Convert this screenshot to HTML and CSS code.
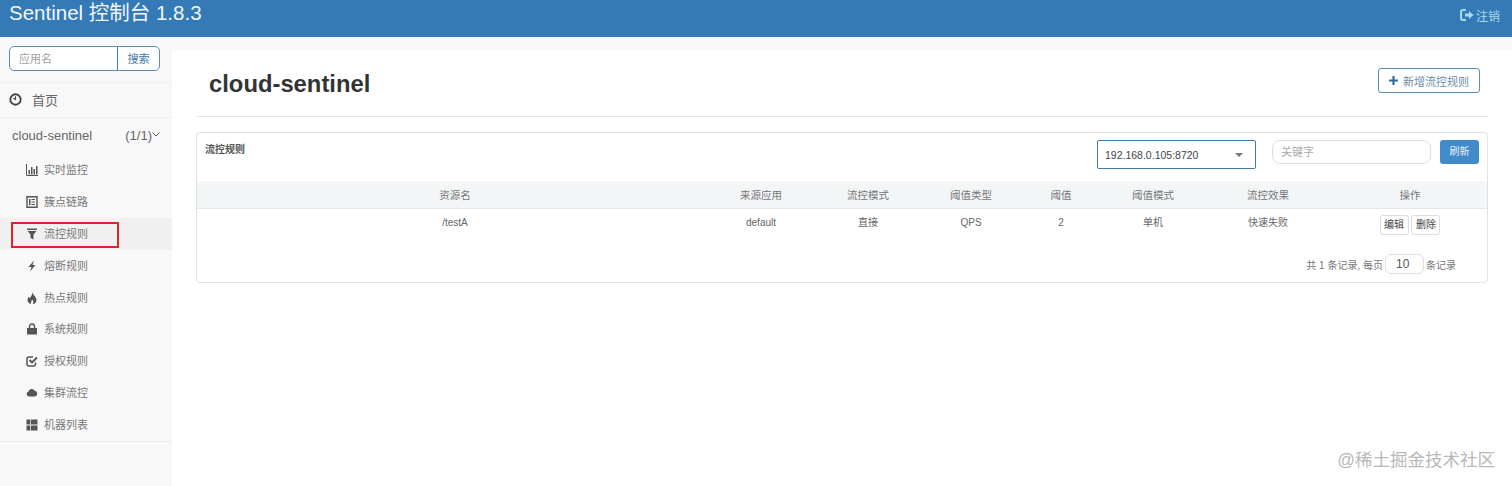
FILE: index.html
```html
<!DOCTYPE html>
<html lang="en">
<head>
  <meta charset="UTF-8">
  <title>Sentinel 控制台 1.8.3</title>
  <link rel="stylesheet" href="styles.css">
</head>
<body>
  <!-- Top bar -->
  <header class="navbar">
    <div class="brand">Sentinel 控制台 1.8.3</div>
    <a class="logout">
      <svg class="logout-icon" viewBox="0 0 14 12"><path d="M6 1H3a2 2 0 0 0-2 2v6a2 2 0 0 0 2 2h3" fill="none" stroke="currentColor" stroke-width="2"/><path d="M5 4.500h4V2l4.500 4L9 10V7.500H5z" fill="currentColor"/></svg>
      注销
    </a>
  </header>

  <div class="layout">
    <!-- Sidebar -->
    <aside class="sidebar">
      <div class="search-group">
        <div class="search-input">应用名</div>
        <div class="search-btn">搜索</div>
      </div>
      <div class="home-row">
        <svg class="home-icon" viewBox="0 0 14 14"><circle cx="7" cy="7" r="5.600" fill="none" stroke="currentColor" stroke-width="2"/><path d="M7 3.500V7L4.500 5.500" fill="none" stroke="currentColor" stroke-width="1.200"/></svg>
        <span>首页</span>
      </div>
      <div class="app-row">
        <span>cloud-sentinel</span>
        <span class="app-count">(1/1)<svg class="chevron" viewBox="0 0 8 5"><path d="M.5 .5 4 4 7.500 .5" fill="none" stroke="currentColor"/></svg></span>
      </div>
      <nav class="menu">
        <div class="menu-item">
          <svg class="menu-icon" viewBox="0 0 12 12"><path d="M.5 0v11.500H12" fill="none" stroke="currentColor"/><path d="M2.500 6h1.500v4.500H2.500zM5 3h1.500v7.500H5zM7.500 5H9v5.500H7.500zM10 2h1.500v8.500H10z" fill="currentColor"/></svg>
          <span class="menu-text">实时监控</span>
        </div>
        <div class="menu-item">
          <svg class="menu-icon" viewBox="0 0 12 12"><path d="M1 .7h10v10.600H1z" fill="none" stroke="currentColor" stroke-width="1.400"/><path d="M3 3h1.500v6H3zM5.500 3H9v1H5.500zM5.500 5.500H9v1H5.500zM5.500 8H9v1H5.500z" fill="currentColor"/></svg>
          <span class="menu-text">簇点链路</span>
        </div>
        <div class="menu-item active">
          <svg class="menu-icon" viewBox="0 0 12 12"><path d="M1 .5h10V2H1zM1.500 3h9L7.500 6.500v5l-3-1.500V6.500z" fill="currentColor"/></svg>
          <span class="menu-text">流控规则</span>
          <span class="highlight"></span>
        </div>
        <div class="menu-item">
          <svg class="menu-icon" viewBox="0 0 12 12"><path d="M8 .5 2.500 7h3L4 11.500 9.500 5h-3z" fill="currentColor"/></svg>
          <span class="menu-text">熔断规则</span>
        </div>
        <div class="menu-item">
          <svg class="menu-icon" viewBox="0 0 12 12"><path d="M6 0c.5 2.500 4.500 4.500 4.500 8A4.200 4.200 0 0 1 6.500 12c1.500-1.500 1-3-.5-4.500C6 9 4.500 10 5 12 3 11.500 1.500 10 1.500 8c0-1.500.8-2.800 1.500-3.500 0 1 .5 1.500 1 1.500C5 4.500 6.500 3 6 0z" fill="currentColor"/></svg>
          <span class="menu-text">热点规则</span>
        </div>
        <div class="menu-item">
          <svg class="menu-icon" viewBox="0 0 12 12"><path d="M3.500 5V3.500a2.500 2.500 0 0 1 5 0V5" fill="none" stroke="currentColor" stroke-width="1.400"/><path d="M1 5h10v6.500H1z" fill="currentColor"/></svg>
          <span class="menu-text">系统规则</span>
        </div>
        <div class="menu-item">
          <svg class="menu-icon" viewBox="0 0 12 12"><path d="M9.500 7.500V9a2 2 0 0 1-2 2H3a2 2 0 0 1-2-2V4a2 2 0 0 1 2-2h4" fill="none" stroke="currentColor" stroke-width="1.500"/><path d="M3.500 5 6 7.500 11 2.500" fill="none" stroke="currentColor" stroke-width="1.800"/></svg>
          <span class="menu-text">授权规则</span>
        </div>
        <div class="menu-item">
          <svg class="menu-icon" viewBox="0 0 12 12"><path d="M3 9.500a2.500 2.500 0 0 1-.5-4.900A3.300 3.300 0 0 1 8.700 3.800 2.900 2.900 0 0 1 9 9.500z" fill="currentColor"/></svg>
          <span class="menu-text">集群流控</span>
        </div>
        <div class="menu-item">
          <svg class="menu-icon" viewBox="0 0 12 12"><path d="M.5 .5h3.800v5H.5zM5 .5h6.500v5H5zM.5 6.500h3.800v5H.5zM5 6.500h6.500v5H5z" fill="currentColor"/></svg>
          <span class="menu-text">机器列表</span>
        </div>
      </nav>
    </aside>

    <!-- Main content -->
    <main class="content">
      <div class="page-head">
        <h1 class="page-title">cloud-sentinel</h1>
        <div class="add-btn">
          <svg class="plus-icon" viewBox="0 0 10 10"><path d="M3.800 0h2.400v3.800H10v2.400H6.200V10H3.800V6.200H0V3.800h3.800z" fill="currentColor"/></svg>
          新增流控规则
        </div>
      </div>

      <section class="panel">
        <div class="panel-head">
          <div class="panel-title">流控规则</div>
          <div class="select-box">
            <span>192.168.0.105:8720</span>
            <span class="caret"></span>
          </div>
          <div class="keyword-input">关键字</div>
          <div class="refresh-btn">刷新</div>
        </div>

        <div class="rule-row rule-head">
          <div>资源名</div>
          <div>来源应用</div>
          <div>流控模式</div>
          <div>阈值类型</div>
          <div>阈值</div>
          <div>阈值模式</div>
          <div>流控效果</div>
          <div class="col-ops">操作</div>
        </div>
        <div class="rule-row rule-body">
          <div>/testA</div>
          <div>default</div>
          <div>直接</div>
          <div>QPS</div>
          <div>2</div>
          <div>单机</div>
          <div>快速失败</div>
          <div class="col-ops">
            <span class="mini-btn">编辑</span>
            <span class="mini-btn">删除</span>
          </div>
        </div>

        <div class="panel-foot">
          <span>共 1 条记录, 每页</span>
          <span class="page-size">10</span>
          <span>条记录</span>
        </div>
      </section>
    </main>
  </div>

  <div class="watermark">@稀土掘金技术社区</div>
</body>
</html>
```

FILE: styles.css
```css
/* Reset, base font */
html, body {
  height: 100%;
}
body {
  margin: 0;
  position: relative;
  overflow: hidden;
  background: #fff;
  color: #676a6c;
  font-family: "Liberation Sans", "Noto Sans CJK SC", sans-serif;
  font-size: 10px;
}

/* Top bar */
.navbar {
  height: 37px;
  box-sizing: border-box;
  padding: 0 12px 12px 9px;
  display: flex;
  justify-content: space-between;
  align-items: center;
  background: #337ab7;
}
.brand {
  color: #f2f6fa;
  font-size: 20.500px;
  line-height: 24px;
}
.logout {
  display: flex;
  align-items: center;
  gap: 2px;
  margin-top: 5px;
  color: #a9dbe8;
  font-size: 12px;
}
.logout-icon {
  width: 14px;
  height: 12px;
}

.layout {
  display: flex;
  height: 449px;
}

/* Sidebar */
.sidebar {
  width: 172px;
  flex: none;
  background: #f8f8f8;
}
.search-group {
  display: flex;
  height: 25px;
  margin: 9px 12px 0 9px;
  box-sizing: border-box;
  border: 1px solid #5b8db8;
  border-radius: 5px;
  background: #fff;
  font-size: 11px;
}
.search-input {
  flex: 1;
  padding-left: 9px;
  line-height: 24px;
  color: #a0a0a0;
}
.search-btn {
  width: 41px;
  border-left: 1px solid #3f7cae;
  text-align: center;
  line-height: 25px;
  color: #3f78ab;
}
.home-row {
  display: flex;
  align-items: center;
  height: 36px;
  margin-top: 11px;
  padding: 0 0 2px 9px;
  box-sizing: border-box;
  border-top: 1px solid #f1f1f1;
  border-bottom: 1px solid #eeeeee;
  font-size: 13px;
  color: #666;
}
.home-icon {
  width: 13px;
  height: 13px;
  margin-right: 10px;
  color: #444;
}
.app-row {
  display: flex;
  justify-content: space-between;
  align-items: center;
  height: 35px;
  padding: 0 12px;
  font-size: 13px;
  color: #666;
}
.chevron {
  width: 8px;
  height: 5px;
  margin-bottom: 3px;
  color: #555;
}
.menu {
  padding-top: 1.500px;
  border-bottom: 1px solid #ececec;
}
.menu-item {
  position: relative;
  display: flex;
  align-items: center;
  height: 31.800px;
  padding-left: 26px;
  color: #777;
  font-size: 11px;
}
.menu-item.active {
  background: #f0f0f0;
}
.menu-icon {
  width: 12px;
  height: 12px;
  margin-right: 6px;
  color: #555;
}
.menu-text {
  line-height: 14px;
}
/* red marker box drawn over the active row */
.highlight {
  position: absolute;
  left: 11px;
  top: 4px;
  width: 108px;
  height: 26px;
  box-sizing: border-box;
  border: 2px solid #d9252f;
}

/* Main content */
.content {
  flex: 1;
  padding: 13px 24px 0 25px;
  background: linear-gradient(#f9f9f9 13px, #fff 13px);
}
.page-head {
  display: flex;
  justify-content: space-between;
  align-items: flex-start;
  height: 67px;
  box-sizing: border-box;
  padding: 18px 8px 0 12px;
  border-bottom: 1px solid #e7e7e7;
}
.page-title {
  margin: 2px 0 0;
  color: #333;
  font-size: 23.800px;
  line-height: 28px;
  font-weight: 700;
}
.add-btn {
  display: flex;
  align-items: center;
  gap: 5px;
  height: 25px;
  box-sizing: border-box;
  padding: 0 10px;
  border: 1px solid #5b8db8;
  border-radius: 3px;
  color: #6b8caa;
  font-size: 11px;
}
.plus-icon {
  width: 9px;
  height: 9px;
  color: #2f6d9f;
}

/* Rules panel */
.panel {
  margin: 15px 0 0 -1px;
  height: 151px;
  box-sizing: border-box;
  border: 1px solid #e2e2e2;
  border-radius: 4px;
}
.panel-head {
  display: flex;
  align-items: flex-start;
  height: 48px;
  box-sizing: border-box;
  padding: 7px 8px 0 8px;
}
.panel-title {
  flex: 1;
  padding-top: 1px;
  color: #555;
  font-size: 10px;
  font-weight: 700;
}
.select-box {
  display: flex;
  justify-content: space-between;
  align-items: center;
  width: 159px;
  height: 29px;
  box-sizing: border-box;
  padding: 0 12px 0 7px;
  border: 1px solid #3f7cae;
  border-radius: 2px;
  color: #444;
  font-size: 10.500px;
}
.caret {
  width: 0;
  height: 0;
  border-left: 4px solid transparent;
  border-right: 4px solid transparent;
  border-top: 4px solid #777;
}
.keyword-input {
  width: 159px;
  height: 24px;
  box-sizing: border-box;
  margin-left: 16px;
  padding-left: 8px;
  border: 1px solid #ddd;
  border-radius: 8px;
  color: #aaa;
  font-size: 11px;
  line-height: 22px;
}
.refresh-btn {
  width: 39px;
  height: 24px;
  margin-left: 9px;
  border-radius: 3px;
  background: #428bca;
  color: #e8f1f8;
  font-size: 10px;
  line-height: 24px;
  text-align: center;
}

/* Table rows */
.rule-row {
  display: grid;
  grid-template-columns: 516px 96px 118px 88px 92px 92px 138px 1fr;
  text-align: center;
  font-size: 10px;
  line-height: 14px;
}
.rule-head {
  height: 28px;
  align-items: center;
  background: #f3f6f7;
  border-bottom: 1px solid #e6e6e6;
  box-sizing: border-box;
  color: #777;
  font-size: 10.500px;
}
.rule-body {
  height: 40px;
  padding-top: 7px;
  box-sizing: border-box;
  color: #666;
}
.col-ops {
  padding-right: 4px;
}
.rule-body .col-ops {
  margin-top: -1px;
}
.mini-btn {
  display: inline-block;
  width: 29px;
  height: 20px;
  box-sizing: border-box;
  border: 1px solid #ddd;
  border-radius: 3px;
  color: #444;
  line-height: 18px;
  font-size: 10px;
}
.panel-foot {
  display: flex;
  justify-content: flex-end;
  align-items: center;
  gap: 2px;
  padding: 5px 31px 0 0;
  color: #777;
  font-size: 10px;
}
.page-size {
  width: 39px;
  height: 20px;
  box-sizing: border-box;
  padding-left: 10px;
  border: 1px solid #ddd;
  border-radius: 6px;
  color: #555;
  font-size: 12px;
  line-height: 18px;
}

/* Site watermark over the corner */
.watermark {
  position: absolute;
  right: 17px;
  bottom: 14px;
  color: #b8b8b8;
  font-size: 17.500px;
  line-height: 24px;
}
```
